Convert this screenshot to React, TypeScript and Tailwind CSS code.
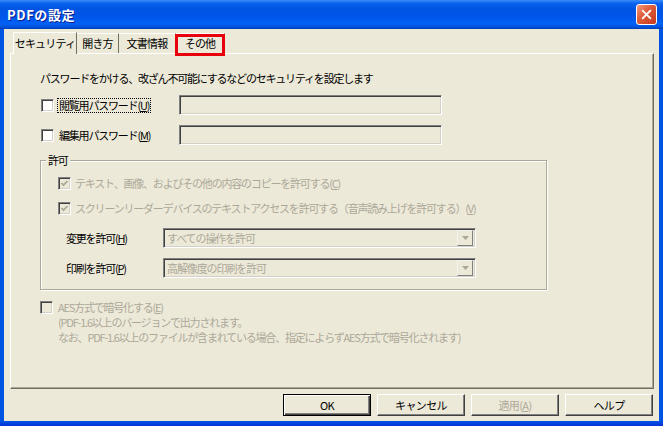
import React from 'react';

const FONT = "font-['Noto_Sans_CJK_JP','Liberation_Sans',sans-serif]";
const GRAY = 'text-[#aca899]';

const Checkbox: React.FC<{ checked?: boolean; disabled?: boolean }> = ({ checked = false, disabled = false }) => (
    <span
        className={`relative inline-block w-[13px] h-[13px] shrink-0 border border-t-[#808080] border-l-[#808080] border-b-white border-r-white shadow-[inset_1px_1px_0_#404040,inset_-1px_-1px_0_#d4d0c8] ${disabled ? 'bg-[#ece9d8]' : 'bg-white'}`}
    >
        {checked && (
            <svg viewBox="0 0 11 11" className="absolute left-0 top-0 w-[11px] h-[11px]">
                <polyline points="2.5,5 4.5,7.2 8.5,3" fill="none" stroke="#aca899" strokeWidth="1.8" />
            </svg>
        )}
    </span>
);

const Sunken: React.FC<{ className?: string; children?: React.ReactNode }> = ({ className = '', children }) => (
    <div
        className={`border border-t-[#808080] border-l-[#808080] border-b-white border-r-white shadow-[inset_1px_1px_0_#404040,inset_-1px_-1px_0_#d4d0c8] bg-[#ece9d8] ${className}`}
    >
        {children}
    </div>
);

const Combo: React.FC<{ value: string }> = ({ value }) => (
    <Sunken className="w-[313px] h-[20px] flex items-center pl-[3px] pr-[2px]">
        <span className={`flex-1 text-[11px] tracking-[-1.1px] ${GRAY}`}>{value}</span>
        <span className="w-[16px] h-[16px] flex items-center justify-center bg-[#ece9d8] border border-t-[#f4f3ee] border-l-[#f4f3ee] border-b-[#808080] border-r-[#808080]">
            <svg viewBox="0 0 7 4" className="w-[7px] h-[4px]">
                <polygon points="0,0 7,0 3.5,4" fill="#aca899" />
            </svg>
        </span>
    </Sunken>
);

const Button: React.FC<{ label: React.ReactNode; primary?: boolean; disabled?: boolean }> = ({ label, primary, disabled }) => (
    <button
        className={`w-[88px] h-[22px] bg-[#ece9d8] text-[11px] tracking-[-0.6px] flex items-center justify-center ${
            primary
                ? 'border border-black shadow-[inset_1px_1px_0_#fff,inset_-1px_-1px_0_#404040,inset_-2px_-2px_0_#808080]'
                : 'border border-t-white border-l-white border-b-[#404040] border-r-[#404040] shadow-[inset_-1px_-1px_0_#808080]'
        } ${disabled ? GRAY : 'text-black'}`}
    >
        {label}
    </button>
);

const App: React.FC = () => {
    return (
        <div className={`w-[663px] h-[426px] overflow-hidden bg-[#0054e3] flex flex-col ${FONT}`}>
            {/* title bar */}
            <div className="h-[29px] shrink-0 flex items-center justify-between pl-[7px] pr-[6px] bg-[linear-gradient(to_bottom,#3a8cf8_0%,#0a62ee_12%,#0054e3_30%,#0055eb_60%,#0262f5_82%,#0050d8_94%,#0040b0_100%)]">
                <span className="text-white font-bold text-[13px] tracking-[0.6px] [text-shadow:1px_1px_0_#0a1e8c]">PDFの設定</span>
                <div className="w-[21px] h-[21px] rounded-[3px] border border-white bg-[linear-gradient(135deg,#f29a7f_0%,#e0603e_40%,#c4381b_100%)] flex items-center justify-center">
                    <svg viewBox="0 0 12 12" className="w-[11px] h-[11px]">
                        <path d="M2 2 L10 10 M10 2 L2 10" stroke="#fff" strokeWidth="2" strokeLinecap="square" />
                    </svg>
                </div>
            </div>

            {/* window body */}
            <div className="mx-[4px] h-[392px] shrink-0 bg-[#ece9d8] flex flex-col pl-[6px] pr-[5px] text-black">
                {/* tabs */}
                <div className="h-[24px] flex items-end pl-[3px] text-[11px] tracking-[-0.8px]">
                    <div className="relative z-10 h-[22px] w-[64px] -mb-px bg-[#ece9d8] border border-b-0 border-t-white border-l-white border-r-[#716f64] flex items-center justify-center">
                        セキュリティ
                    </div>
                    <div className="h-[20px] w-[42px] border-t border-t-white border-r border-r-[#716f64] flex items-center justify-center">
                        開き方
                    </div>
                    <div className="h-[20px] w-[57px] border-t border-t-white border-r border-r-[#716f64] flex items-center justify-center">
                        文書情報
                    </div>
                    <div className="relative h-[20px] w-[49px] border-t border-t-white border-r border-r-[#716f64] flex items-center justify-center">
                        その他
                        <span className="absolute left-[-1px] right-[-1px] top-0 bottom-[-3px] border-[3px] border-[#e8000d]" />
                    </div>
                </div>

                {/* tab panel */}
                <div className="h-[336px] shrink-0 border border-t-white border-l-white border-b-[#716f64] border-r-[#716f64] shadow-[inset_-1px_-1px_0_#aca899] pl-[29px] pt-[17px] text-[11px] tracking-[-1.2px]">
                    <div className="h-[14px] leading-[14px] whitespace-nowrap">
                        パスワードをかける、改ざん不可能にするなどのセキュリティを設定します
                    </div>

                    <div className="mt-[10px] h-[20px] flex items-center">
                        <div className="w-[139px] flex items-center pl-px">
                            <Checkbox />
                            <span className="ml-[3px] border border-dotted border-black px-px leading-[13px] whitespace-nowrap">
                                閲覧用パスワード(<u>U</u>)
                            </span>
                        </div>
                        <Sunken className="w-[263px] h-[20px]" />
                    </div>

                    <div className="mt-[10px] h-[20px] flex items-center">
                        <div className="w-[139px] flex items-center pl-px">
                            <Checkbox />
                            <span className="ml-[4px] px-px whitespace-nowrap">
                                編集用パスワード(<u>M</u>)
                            </span>
                        </div>
                        <Sunken className="w-[263px] h-[20px]" />
                    </div>

                    {/* group box */}
                    <div className="relative mt-[15px] w-[507px] h-[130px] border border-[#aca899] shadow-[inset_1px_1px_0_#fff,1px_1px_0_#fff] pl-[17px] pt-[14px]">
                        <span className="absolute -top-[8px] left-[5px] px-[2px] bg-[#ece9d8] leading-[14px]">許可</span>

                        <div className={`h-[16px] flex items-center ${GRAY}`}>
                            <Checkbox checked disabled />
                            <span className="ml-[4px] whitespace-nowrap">
                                テキスト、画像、およびその他の内容のコピーを許可する(<u>C</u>)
                            </span>
                        </div>
                        <div className={`mt-[9px] h-[16px] flex items-center ${GRAY}`}>
                            <Checkbox checked disabled />
                            <span className="ml-[4px] whitespace-nowrap">
                                スクリーンリーダーデバイスのテキストアクセスを許可する（音声読み上げを許可する）(<u>V</u>)
                            </span>
                        </div>

                        <div className="mt-[12px] h-[20px] flex items-center">
                            <span className="w-[97px] ml-[8px] whitespace-nowrap">
                                変更を許可(<u>H</u>)
                            </span>
                            <Combo value="すべての操作を許可" />
                        </div>
                        <div className="mt-[10px] h-[20px] flex items-center">
                            <span className="w-[97px] ml-[8px] whitespace-nowrap">
                                印刷を許可(<u>P</u>)
                            </span>
                            <Combo value="高解像度の印刷を許可" />
                        </div>
                    </div>

                    {/* AES */}
                    <div className={`mt-[10px] flex items-start ${GRAY}`}>
                        <div className="h-[15px] flex items-center">
                            <Checkbox disabled />
                        </div>
                        <div className="ml-[5px] leading-[15px] whitespace-nowrap">
                            <div>AES方式で暗号化する(<u>E</u>)</div>
                            <div>(PDF-1.6以上のバージョンで出力されます。</div>
                            <div>なお、PDF-1.6以上のファイルが含まれている場合、指定によらずAES方式で暗号化されます)</div>
                        </div>
                    </div>
                </div>

                {/* buttons */}
                <div className="mt-[5px] flex justify-end gap-[6px] pr-px">
                    <Button label="OK" primary />
                    <Button label="キャンセル" />
                    <Button label={<>適用(<u>A</u>)</>} disabled />
                    <Button label="ヘルプ" />
                </div>
            </div>
            <div className="flex-1 bg-[linear-gradient(to_bottom,#0054e3,#0831d9)]" />
        </div>
    );
};

export default App;
